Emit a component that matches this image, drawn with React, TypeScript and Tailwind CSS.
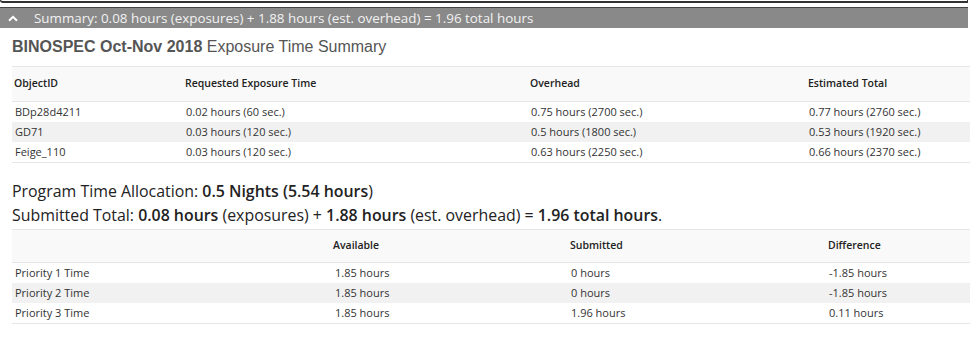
import React from "react";

const t1 = [
  ["BDp28d4211", "0.02 hours (60 sec.)", "0.75 hours (2700 sec.)", "0.77 hours (2760 sec.)"],
  ["GD71", "0.03 hours (120 sec.)", "0.5 hours (1800 sec.)", "0.53 hours (1920 sec.)"],
  ["Feige_110", "0.03 hours (120 sec.)", "0.63 hours (2250 sec.)", "0.66 hours (2370 sec.)"],
];
const t2 = [
  ["Priority 1 Time", "1.85 hours", "0 hours", "-1.85 hours"],
  ["Priority 2 Time", "1.85 hours", "0 hours", "-1.85 hours"],
  ["Priority 3 Time", "1.85 hours", "1.96 hours", "0.11 hours"],
];

export default function App() {
  return (
    <div className="w-[970px] h-[337px] bg-white overflow-hidden" style={{ fontFamily: "'Open Sans', sans-serif" }}>
      <div className="h-[3px] w-[968px] border-b-2 border-l border-r border-[#333] rounded-bl-[3px]" />
      <div className="mt-[4px] h-[21px] w-[968px] bg-[#898989] border-t border-[#444] flex items-center text-[#f2f2f2] text-[13.4px]">
        <svg width="12" height="9" viewBox="0 0 12 9" className="ml-[7px] mr-[15px]">
          <path d="M2 6.8 L6 2.8 L10 6.8" stroke="#fff" strokeWidth="2" fill="none" />
        </svg>
        <span>Summary: 0.08 hours (exposures) + 1.88 hours (est. overhead) = 1.96 total hours</span>
      </div>
      <div className="mt-[9px] ml-[12px] text-[16px] text-[#555] leading-[20px]" style={{ fontFamily: "'Liberation Sans', Arial, sans-serif" }}>
        <b>BINOSPEC Oct-Nov 2018</b> Exposure Time Summary
      </div>
      <div className="mt-[9px] ml-[12px] border-t border-b border-[#e6e6e6] text-[11px] text-[#333]">
        <div className="grid grid-cols-[171px_344px_278px_1fr] h-[35px] items-center bg-[#f9f9f9] border-b border-[#e6e6e6] font-semibold text-[10.5px] text-[#222]">
          <div className="pl-[2px]">ObjectID</div>
          <div className="pl-[2px]">Requested Exposure Time</div>
          <div className="pl-[3px]">Overhead</div>
          <div className="pl-[3px]">Estimated Total</div>
        </div>
        {t1.map((r, i) => (
          <div key={i} className={`grid grid-cols-[171px_344px_278px_1fr] h-[20px] items-center ${i === 1 ? "bg-[#f1f1f1]" : ""}`}>
            <div className="pl-[3px]">{r[0]}</div>
            <div className="pl-[3px]">{r[1]}</div>
            <div className="pl-[4px]">{r[2]}</div>
            <div className="pl-[4px]">{r[3]}</div>
          </div>
        ))}
      </div>
      <div className="mt-[16px] ml-[12px] text-[15.9px] text-[#222] leading-[24px]">
        <div>Program Time Allocation: <span className="font-semibold">0.5 Nights (5.54 hours</span>)</div>
        <div>Submitted Total: <span className="font-semibold">0.08 hours</span> (exposures) + <span className="font-semibold">1.88 hours</span> (est. overhead) = <span className="font-semibold">1.96 total hours</span>.</div>
      </div>
      <div className="mt-[2px] ml-[12px] border-t border-b border-[#e6e6e6] text-[11px] text-[#333]">
        <div className="grid grid-cols-[318px_237px_258px_1fr] h-[33px] items-center bg-[#f9f9f9] border-b border-[#e6e6e6] font-semibold text-[10.5px] text-[#222]">
          <div></div>
          <div className="pl-[3px]">Available</div>
          <div className="pl-[3px]">Submitted</div>
          <div className="pl-[3px]">Difference</div>
        </div>
        {t2.map((r, i) => (
          <div key={i} className={`grid grid-cols-[318px_237px_258px_1fr] h-[20px] items-center ${i === 1 ? "bg-[#f1f1f1]" : ""}`}>
            <div className="pl-[3px]">{r[0]}</div>
            <div className="pl-[5px]">{r[1]}</div>
            <div className="pl-[4px]">{r[2]}</div>
            <div className="pl-[4px]">{r[3]}</div>
          </div>
        ))}
      </div>
    </div>
  );
}
